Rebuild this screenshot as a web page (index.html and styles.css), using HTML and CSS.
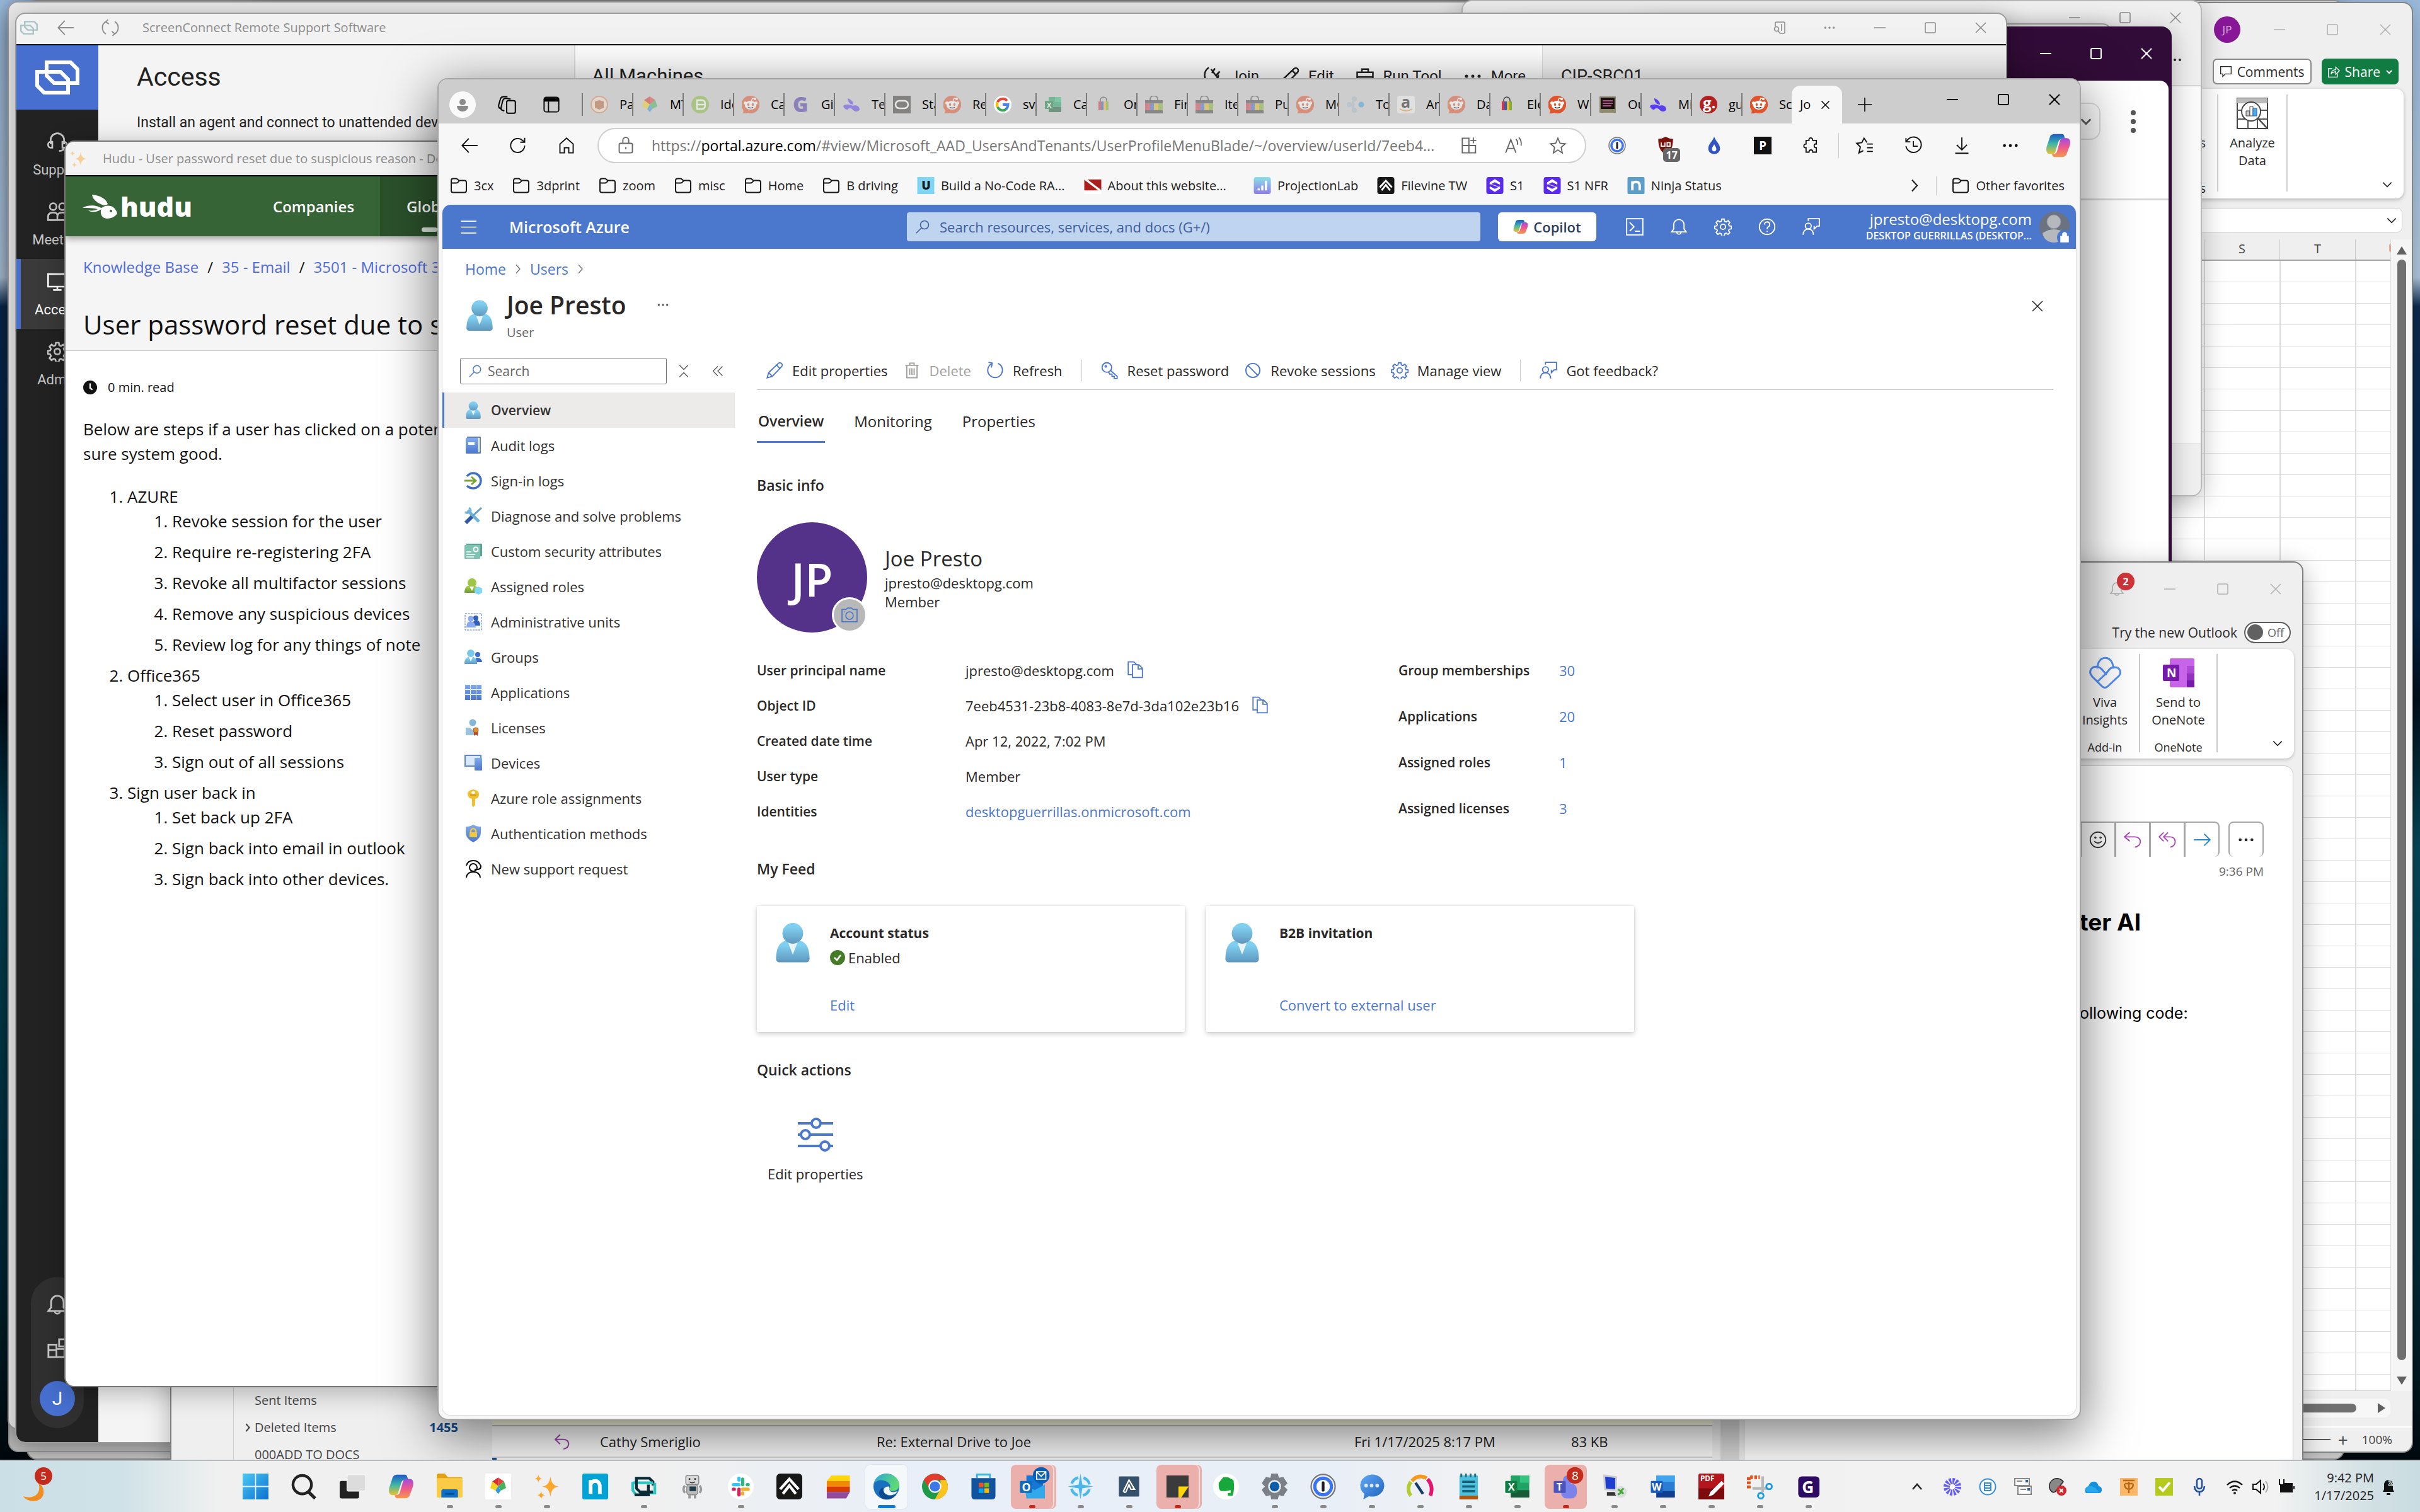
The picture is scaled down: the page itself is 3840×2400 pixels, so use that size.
FILE: index.html
```html
<!DOCTYPE html>
<html lang="en">
<head>
<meta charset="utf-8">
<title>Joe Presto - Microsoft Azure</title>
<link rel="stylesheet" href="styles.css">
</head>
<body>
<svg class="defs" aria-hidden="true">
  <defs>
    <linearGradient id="gUser" x1="0" y1="0" x2="0" y2="1"><stop offset="0.2" stop-color="#7fcff0"/><stop offset="1" stop-color="#5f97bd"/></linearGradient>
    <linearGradient id="gBlue" x1="0" y1="0" x2="0" y2="1"><stop offset="0" stop-color="#82a9ec"/><stop offset="1" stop-color="#4b77cc"/></linearGradient>
    <linearGradient id="gGreen" x1="0" y1="0" x2="0" y2="1"><stop offset="0" stop-color="#a9d049"/><stop offset="1" stop-color="#6f9a33"/></linearGradient>
    <linearGradient id="gWin" x1="0" y1="0" x2="1" y2="1"><stop offset="0" stop-color="#4cc9f5"/><stop offset="1" stop-color="#0a70cf"/></linearGradient>
    <linearGradient id="gCopA" x1="0" y1="0" x2="0" y2="1"><stop offset="0" stop-color="#1b59c9"/><stop offset="0.5" stop-color="#3fb6a8"/><stop offset="1" stop-color="#e8c32f"/></linearGradient>
    <linearGradient id="gCopB" x1="0" y1="0" x2="0" y2="1"><stop offset="0" stop-color="#a14be0"/><stop offset="0.5" stop-color="#ee5a8c"/><stop offset="1" stop-color="#f59a4a"/></linearGradient>
    <linearGradient id="gEdge" x1="0" y1="0" x2="1" y2="0.4"><stop offset="0" stop-color="#2aa5dc"/><stop offset="1" stop-color="#5edb72"/></linearGradient>
    <linearGradient id="gChat" x1="0" y1="0" x2="1" y2="1"><stop offset="0" stop-color="#62a8f2"/><stop offset="1" stop-color="#1e63bf"/></linearGradient>
    <linearGradient id="gLab" x1="0" y1="0" x2="0" y2="1"><stop offset="0" stop-color="#8be0ea"/><stop offset="1" stop-color="#8d7be6"/></linearGradient>
  </defs>
  <symbol id="min" viewBox="0 0 20 20"><path class="ln" d="M1 10h18"/></symbol>
  <symbol id="max" viewBox="0 0 20 20"><rect class="ln" x="2" y="2" width="16" height="16" rx="2"/></symbol>
  <symbol id="close" viewBox="0 0 20 20"><path class="ln" d="M2 2l16 16M18 2L2 18"/></symbol>
  <symbol id="dots" viewBox="0 0 24 24"><circle cx="4" cy="12" r="2"/><circle cx="12" cy="12" r="2"/><circle cx="20" cy="12" r="2"/></symbol>
  <symbol id="down" viewBox="0 0 24 24"><path class="ln" d="M4 8l8 8 8-8"/></symbol>
  <symbol id="right" viewBox="0 0 24 24"><path class="ln" d="M8 3l8 9-8 9"/></symbol>
  <symbol id="back" viewBox="0 0 24 24"><path class="ln" d="M23 12H2M11 2.500L2 12l9 9.500"/></symbol>
  <symbol id="reload" viewBox="0 0 24 24"><path class="ln" d="M21 12a9.500 9.500 0 1 1-3-7l3 2.500M21 1.500v6h-6"/></symbol>
  <symbol id="cycle" viewBox="0 0 24 24"><path class="ln" d="M6 3.500a10 10 0 0 0 0 17M18 3.500a10 10 0 0 1 0 17M9 1L6 4l4 3M15 23l3-3-4-3"/></symbol>
  <symbol id="home" viewBox="0 0 24 24"><path class="ln" d="M3 10l9-8 9 8v12h-6v-7H9v7H3z"/></symbol>
  <symbol id="folder" viewBox="0 0 28 26"><path class="ln" d="M2 5a3 3 0 0 1 3-3h5c2 0 3 3 5 3h8a3 3 0 0 1 3 3v13a3 3 0 0 1-3 3H5a3 3 0 0 1-3-3zM2 9h8c2 0 3-1 5-4"/></symbol>
  <symbol id="search" viewBox="0 0 24 24"><circle class="ln" cx="15" cy="9" r="6.500"/><path class="ln" d="M10 14L2 22"/></symbol>
  <symbol id="user" viewBox="0 0 24 26"><path fill="url(#gUser)" d="M1 24c0-7 2-11 6-12h10c4 1 6 5 6 12 0 1-1 2-2 2H3c-1 0-2-1-2-2z"/><path fill="#e9f5fb" d="M8.500 12h7L12 21z"/><circle cx="12" cy="7" r="6.800" fill="url(#gUser)"/></symbol>
  <symbol id="pencil" viewBox="0 0 24 24"><path class="ln" d="M2 22l2-7L17 2.500a3 3 0 0 1 4.500 4.500L9 20zM15 5l4.500 4.500M4 15l5 5"/></symbol>
  <symbol id="trash" viewBox="0 0 24 24"><path class="ln" d="M3 5h18M5 5v17h14V5M9 5V2h6v3M9 9v9M12 9v9M15 9v9"/></symbol>
  <symbol id="refresh" viewBox="0 0 24 24"><path class="ln" d="M16 2.500a10 10 0 1 1-9 .5M3 1l5 1-1 6"/></symbol>
  <symbol id="key" viewBox="0 0 24 24"><circle class="ln" cx="8" cy="8" r="6.500"/><circle class="ln" cx="6.500" cy="6.500" r="1"/><path class="ln" d="M13 12l9 8v3h-4v-3h-3v-3h-3l-2-3"/></symbol>
  <symbol id="ban" viewBox="0 0 24 24"><circle class="ln" cx="12" cy="12" r="9.500"/><path class="ln" d="M5.500 5.500l13 13"/></symbol>
  <symbol id="gear" viewBox="0 0 24 24"><circle class="ln" cx="12" cy="12" r="3.500"/><path class="ln" d="M10.300 1.500h3.400l.6 3 2 .9 2.600-1.700 2.400 2.400-1.700 2.600.9 2 3 .6v3.400l-3 .6-.9 2 1.700 2.600-2.400 2.400-2.600-1.700-2 .9-.6 3h-3.400l-.6-3-2-.9-2.600 1.700-2.400-2.400 1.700-2.600-.9-2-3-.6v-3.400l3-.6.9-2-1.700-2.600 2.400-2.400 2.600 1.700 2-.9z"/></symbol>
  <symbol id="feedback" viewBox="0 0 24 24"><circle class="ln" cx="8" cy="11" r="4"/><path class="ln" d="M1 23c0-5 3-8 7-8s7 3 7 8M8 4V1h15v10h-3l-4 4v-4"/></symbol>
  <symbol id="copy" viewBox="0 0 24 24"><path class="ln" d="M9 19H2V1h8l4 4M8 5h9l5 5v13H8zM16 5v6h6"/></symbol>
  <symbol id="bell" viewBox="0 0 24 24"><path class="ln" d="M2 19h20l-3-4V9A7 7 0 0 0 5 9v6zM9 19a3 3 0 0 0 6 0"/></symbol>
  <symbol id="star" viewBox="0 0 24 24"><path class="ln" d="M12 2l3 7 7 .7-5.500 4.800L18 22l-6-4-6 4 1.500-7.500L2 9.700 9 9z"/></symbol>
  <symbol id="shellico" viewBox="0 0 24 24"><rect class="ln" x="1" y="1" width="22" height="22"/><path class="ln" d="M5 6l6 6-6 6M12 18h7"/></symbol>
  <symbol id="help" viewBox="0 0 24 24"><circle class="ln" cx="12" cy="12" r="10.500"/><path class="ln" d="M8.500 9a3.500 3.500 0 1 1 5 3c-1 .7-1.500 1-1.500 3M12 17.500v1.500"/></symbol>
  <symbol id="copilot" viewBox="0 0 24 24"><path fill="url(#gCopA)" d="M9 1h6c2 0 2.500 1 3 3l.5 2h-3c-2 0-3 1-3.500 3L9.500 17c-.5 2-1 3-3 3H4c-3 0-4-3-3-7L4 4c.7-2 2-3 5-3z"/><path fill="url(#gCopB)" d="M15 23H9c-2 0-2.500-1-3-3h1.500c2 0 3-1 3.500-3L13.500 8c.5-2 1.500-3 3.500-3h3c3 0 4 3 3 7l-3 8c-.7 2-2 3-5 3z"/></symbol>
  <symbol id="reddit" viewBox="0 0 28 28"><path d="M14 0a14 14 0 1 1-5 27c-2 1-5 1-8 1 2-2 2-4 1-6A14 14 0 0 1 14 0z" fill="#e0532b"/><path d="M15 9l2-5 4 1" stroke="#fff" stroke-width="1.500" fill="none"/><circle cx="21" cy="5" r="2" fill="#fff"/><ellipse cx="14" cy="15" rx="9" ry="7" fill="#fff"/><circle cx="5.500" cy="11.500" r="2.500" fill="#fff"/><circle cx="22.500" cy="11.500" r="2.500" fill="#fff"/><circle cx="10.500" cy="14" r="1.900" fill="#e0532b"/><circle cx="17.500" cy="14" r="1.900" fill="#e0532b"/><path d="M10 18q4 3 8 0" stroke="#222" stroke-width="1.500" fill="none"/></symbol>
  <symbol id="ebay" viewBox="0 0 28 28"><path d="M8 8V5a6 5 0 0 1 12 0v3" fill="none" stroke="#555" stroke-width="2"/><path d="M0 7h28v5H0zM0 23h28v5H0z" fill="#444"/><path d="M0 12h8v11H0z" fill="#d9434a"/><path d="M8 12h6v11H8z" fill="#3f6fd0"/><path d="M14 12h7v11h-7z" fill="#e3bb2e"/><path d="M21 12h7v11h-7z" fill="#88b536"/></symbol>
  <symbol id="ebaybag" viewBox="0 0 28 28"><path d="M9 9V7a5 5 0 0 1 10 0v2" fill="none" stroke="#444" stroke-width="1.500"/><path d="M6 9h4v14H6z" fill="#e0333c"/><path d="M10 9h4v14h-4z" fill="#2b5fd0"/><path d="M14 9h4v14h-4z" fill="#f0b92a"/><path d="M18 9h4v14h-4z" fill="#82b22c"/></symbol>
  <symbol id="bunny" viewBox="0 0 28 28"><path d="M8 4c6 2 9 6 9 10-5 0-9-4-9-10z" fill="#5a3ff0"/><path d="M1 16c4-3 10-3 15 0 6-2 11 1 11 6-2 4-8 4-11 0-3-3-6-3-8 0-3 0-6-2-7-6z" fill="#5a3ff0"/></symbol>
  <symbol id="penta" viewBox="0 0 28 28"><path d="M14 1l9 6-9 7z" fill="#e2453b"/><path d="M14 1L5 7l9 7z" fill="#d83030"/><path d="M23 7l3 10-8 4-4-7z" fill="#46b35c"/><path d="M5 7L2 17l8 4 4-7z" fill="#f3d21b"/><path d="M10 21l4-7 4 7-4 5z" fill="#2e9be0"/></symbol>
  <symbol id="excel" viewBox="0 0 28 28"><rect x="7" y="2" width="20" height="24" rx="1" fill="#21a366"/><path d="M17 2h10v8H17z" fill="#33c481"/><path d="M7 18h20v8H7z" fill="#185c37"/><rect x="1" y="8" width="13" height="13" rx="1" fill="#107c41"/><text x="4" y="18.500" class="it" font-size="11">X</text></symbol>
  <symbol id="sparkle" viewBox="0 0 28 28"><path d="M18 3c1 7 3 10 9 11-6 1-8 4-9 11-1-7-3-10-9-11 6-1 8-4 9-11zM5 1c.5 3 1.500 4 4 4.500C6.500 6 5.500 7 5 10c-.5-3-1.500-4-4-4.500C3.500 5 4.500 4 5 1zM8 19c.5 3 1.500 4 4 4.500-2.500.5-3.500 1.500-4 4.500-.5-3-1.500-4-4-4.500 2.500-.5 3.500-1.500 4-4.500z" fill="#fba62c"/></symbol>
  <symbol id="sc" viewBox="0 0 70 54"><path d="M18 3h38l11 11v22H30L18 24z" fill="none" stroke="currentColor" stroke-width="6"/><path d="M3 18h37l12 12v21H14L3 40z" fill="none" stroke="currentColor" stroke-width="6"/></symbol>
  <symbol id="filevine" viewBox="0 0 28 28"><rect width="28" height="28" rx="4" fill="#171717"/><path d="M4 17L14 6l10 11" fill="none" stroke="#fff" stroke-width="3"/><path d="M7 22l7-9 7 9" fill="none" stroke="#fff" stroke-width="3"/></symbol>
  <symbol id="s1" viewBox="0 0 28 28"><rect width="28" height="28" rx="4" fill="#5a2bea"/><path d="M6 9l8-5 8 5v3L14 8l-8 4zM6 19l8 5 8-5v-3l-8 4-8-4zM8 12l12 4" fill="#fff" stroke="#fff" stroke-width="1"/></symbol>
  <symbol id="onepw" viewBox="0 0 28 28"><circle cx="14" cy="14" r="13" fill="#f2f2f6" stroke="#777" stroke-width="1.500"/><circle cx="14" cy="14" r="9" fill="#fff" stroke="#3a74f0" stroke-width="3.500"/><rect x="12.500" y="8.500" width="3" height="11" rx="1" fill="#1b1b2a"/></symbol>
</svg>

<main class="desktop">
  <section class="win back-a"></section>
  <section class="win back-b"></section>

  <section class="win excel" aria-label="Spreadsheet">
    <header class="wbar faint"><span class="jp">JP</span><div class="wbtns"><button aria-label="Minimize"><svg><use href="#min"/></svg></button><button aria-label="Maximize"><svg><use href="#max"/></svg></button><button aria-label="Close"><svg><use href="#close"/></svg></button></div></header>
    <div class="xl-actions">
      <button class="comments"><svg viewBox="0 0 24 24"><path class="ln" d="M2 2h20v14H11l-5 5v-5H2z"/></svg>Comments</button>
      <button class="share"><svg viewBox="0 0 24 24"><path class="ln" d="M9 6H2v16h17v-7M7 16c1-6 5-8 9-8V3l7 7-7 7v-5c-4 0-7 1-9 4z"/></svg>Share<svg class="tiny"><use href="#down"/></svg></button>
    </div>
    <div class="xl-ribbon">
      <div class="xl-cut"><span>s</span><span>s</span></div>
      <button class="analyze"><svg viewBox="0 0 50 50"><path d="M1 1h48v48H1z" fill="#fff" stroke="#444" stroke-width="2"/><path d="M1 1h48v8H1z" fill="#bbb"/><path d="M1 20h48M1 34h48M18 34v15M33 34v15" stroke="#555" stroke-width="2"/><circle cx="23" cy="22" r="15" fill="#fff" stroke="#444" stroke-width="2"/><path d="M15 21h6v8h-6z" fill="#ccc" stroke="#444"/><path d="M21 14h5v15h-5z" fill="#fff" stroke="#444"/><path d="M26 17h6v12h-6z" fill="#55a8e8" stroke="#1a6fc0"/><path d="M34 33l14 15" stroke="#444" stroke-width="2.500"/></svg><span>Analyze<br>Data</span></button>
      <button class="collapse" aria-label="Collapse ribbon"><svg><use href="#down"/></svg></button>
    </div>
    <div class="xl-formula"><svg><use href="#down"/></svg></div>
    <div class="xl-sheet">
      <div class="xl-cells"><div class="xl-cols"><span>S</span><span>T</span><span class="u">U</span></div><div class="xl-grid"></div></div>
      <div class="xl-scroll"><i class="tri-up"></i><b></b><i class="tri-down"></i></div>
    </div>
    <div class="xl-hscroll"><b></b><i></i></div>
    <div class="xl-status"><i></i><span>+</span><span class="pct">100%</span></div>
  </section>

  <section class="win back-e"></section>

  <section class="win peek-c" aria-label="Background window">
    <header class="wbar dim"><div class="wbtns"><button aria-label="Minimize"><svg><use href="#min"/></svg></button><button aria-label="Maximize"><svg><use href="#max"/></svg></button><button aria-label="Close"><svg><use href="#close"/></svg></button></div></header>
    <div class="peek-tools"><svg><use href="#dots"/></svg></div>
    <div class="peek-page"></div>
    <div class="peek-foot"></div>
  </section>
  <section class="win back-d"></section>

  <section class="win purple" aria-label="Slack">
    <header class="wbar light"><div class="wbtns"><button aria-label="Minimize"><svg><use href="#min"/></svg></button><button aria-label="Maximize"><svg><use href="#max"/></svg></button><button aria-label="Close"><svg><use href="#close"/></svg></button></div></header>
    <div class="purple-page"><div class="purple-top"><span class="purple-box"><svg><use href="#down"/></svg></span><span class="kebab"><i></i><i></i><i></i></span></div></div>
  </section>

  <section class="win screenc" aria-label="ScreenConnect">
    <header class="wbar grey"><svg class="sclogo"><use href="#sc"/></svg><svg><use href="#back"/></svg><svg><use href="#cycle"/></svg><span class="ttl">ScreenConnect Remote Support Software</span><div class="wbtns"><button aria-label="Find"><svg viewBox="0 0 20 20"><path class="ln" d="M4 8V3q0-2 2-2h11q2 0 2 2v14q0 2-2 2h-5M14 4v11"/><circle class="ln" cx="6" cy="12" r="3.500"/><path class="ln" d="M8.500 15l3 4"/></svg></button><button aria-label="More"><svg><use href="#dots"/></svg></button><button aria-label="Minimize"><svg><use href="#min"/></svg></button><button aria-label="Maximize"><svg><use href="#max"/></svg></button><button aria-label="Close"><svg><use href="#close"/></svg></button></div></header>
    <div class="sc-body">
      <nav class="sc-side">
        <div class="sc-brand"><svg><use href="#sc"/></svg></div>
        <div class="sc-nav">
          <a href="#support"><svg viewBox="0 0 24 24"><path class="ln" d="M4 15V10a8 8 0 0 1 16 0v5M4 12c-4 0-4 7 0 7h2v-7zM20 12c4 0 4 7 0 7h-2v-7zM20 19c0 3-3 4-6 4"/></svg>Support</a>
          <a href="#meeting"><svg viewBox="0 0 24 24"><circle class="ln" cx="7" cy="6" r="4"/><circle class="ln" cx="18" cy="6" r="4"/><path class="ln" d="M1 22v-4q0-5 6-5t5 5v4zM12 18q0-5 6-5t5 5v4H12"/></svg>Meeting</a>
          <a href="#access" class="on"><svg viewBox="0 0 24 24"><path class="ln" d="M1 3h22v15H1zM7 22h10M12 18v4"/></svg>Access</a>
          <a href="#admin"><svg><use href="#gear"/></svg>Admin</a>
        </div>
        <div class="sc-pill"><svg><use href="#bell"/></svg><svg viewBox="0 0 24 24"><path class="ln" d="M2 8h9v14H2zM11 13h9v9h-9M2 14h9M14 2h8v8h-8z"/></svg><span>J</span></div>
      </nav>
      <div class="sc-info"><h1>Access</h1><p>Install an agent and connect to unattended devices</p></div>
      <div class="sc-list"><h2>All Machines</h2>
        <div class="sc-cmds"><span><svg viewBox="0 0 24 24"><path class="ln" d="M8 1C1 6 1 15 8 21M11 3l9 12M16 2l-4 6M22 6l-5 5M12 15c4 3 9 0 8-5"/></svg>Join</span><span><svg><use href="#pencil"/></svg>Edit</span><span><svg viewBox="0 0 24 24"><path class="ln" d="M2 7h20v14H2zM8 7V3h8v4M2 13h20"/></svg>Run Tool</span><span><svg><use href="#dots"/></svg>More</span></div>
      </div>
      <div class="sc-detail"><h2>CIP-SBC01</h2></div>
    </div>
  </section>

  <section class="win outlook" aria-label="Outlook">
    <header class="wbar faint"><span class="ol-bell"><svg><use href="#bell"/></svg><b>2</b></span><div class="wbtns"><button aria-label="Minimize"><svg><use href="#min"/></svg></button><button aria-label="Maximize"><svg><use href="#max"/></svg></button><button aria-label="Close"><svg><use href="#close"/></svg></button></div></header>
    <div class="ol-try"><label for="newol">Try the new Outlook</label><span class="pill"><input type="checkbox" id="newol"><span>Off</span></span></div>
    <div class="ol-ribbon">
      <div class="ol-group viva"><svg viewBox="0 0 50 50"><path d="M13 18c0-22 24-22 25-2 12-1 15 10 7 16L30 46c-4 4-7 3-10 0L5 31c-8-9 0-18 10-15 5 1 9 9 13 12M40 17c-6-2-9 4-13 9L13 39" fill="none" stroke="#5590f5" stroke-width="3"/></svg><span>Viva<br>Insights</span><small>Add-in</small></div>
      <div class="ol-group"><svg viewBox="0 0 50 50"><rect x="11" y="2" width="39" height="46" rx="2" fill="#c864e8"/><path d="M38 14h12v12H38z" fill="#ae4bd5"/><path d="M38 26h12v11H38z" fill="#9332bf"/><path d="M38 37h12v11H38z" fill="#7719aa"/><rect y="12" width="26" height="26" rx="2" fill="#7719aa"/><text x="6" y="32" class="it" font-size="19">N</text></svg><span>Send to<br>OneNote</span><small>OneNote</small></div>
      <button class="collapse" aria-label="Collapse ribbon"><svg><use href="#down"/></svg></button>
    </div>
    <div class="ol-body">
      <nav class="ol-folders"><a href="#sent">Sent Items</a><a href="#deleted"><svg><use href="#right"/></svg>Deleted Items<b>1455</b></a><a href="#docs">000ADD TO DOCS</a></nav>
      <div class="ol-list">
        <div class="ol-tan"></div>
        <div class="ol-row"><svg viewBox="0 0 24 24"><path class="ln" d="M9 2L2 9l7 7M2 9h12c10 0 10 13 0 14"/></svg><span class="from">Cathy Smeriglio</span><span class="subj">Re: External Drive to Joe</span><span class="date">Fri 1/17/2025 8:17 PM</span><span class="size">83 KB</span></div>
        <div class="ol-next"><i></i></div>
      </div>
      <div class="ol-bar"></div>
      <article class="ol-read">
        <div class="ol-acts"><span class="grp"><button aria-label="React"><svg class="ink" viewBox="0 0 24 24"><circle class="ln" cx="12" cy="12" r="10.500"/><path class="ln" d="M7 14q5 5 10 0"/><circle cx="8.500" cy="9" r="1.500"/><circle cx="15.500" cy="9" r="1.500"/></svg></button><button aria-label="Reply"><svg class="vio" viewBox="0 0 24 24"><path class="ln" d="M8 2L1 8l7 6M1 8h14c10 0 10 13 0 14"/></svg></button><button aria-label="Reply all"><svg class="vio" viewBox="0 0 24 24"><path class="ln" d="M7 2L1 8l6 6M13 2L7 8l6 6M7 8h9c9 0 9 13 0 14"/></svg></button><button aria-label="Forward"><svg class="blu" viewBox="0 0 24 24"><path class="ln" d="M1 12h22M15 4l8 8-8 8"/></svg></button></span><button class="more" aria-label="More"><svg><use href="#dots"/></svg></button></div>
        <time>9:36 PM</time>
        <div class="ol-mail"><h2>ter AI</h2><p>ollowing code:</p></div>
      </article>
    </div>
  </section>

  <section class="win hudu" aria-label="Hudu">
    <header class="wbar grey"><svg class="spark"><use href="#sparkle"/></svg><span class="ttl">Hudu - User password reset due to suspicious reason - Desktop</span></header>
    <nav class="hd-nav">
      <span class="hd-logo"><svg viewBox="0 0 55 38"><path fill="#fff" d="M15 0C28 1 38 7 40 15c-4 3-8 2-11 0C22 12 16 7 15 0z"/><path fill="#fff" d="M0 21c10-6 24-4 31 1-6 6-17 7-22 3 6 1 11 0 15-2-8-2-16-2-24-2z"/><path fill="#fff" d="M30 21c11-7 22-3 25 9-3 5-10 8-17 8-8-1-11-8-8-17z"/><circle cx="45" cy="26" r="2" fill="#376437"/></svg>hudu</span>
      <a href="#companies">Companies</a><a href="#global" class="on">Global</a>
    </nav>
    <div class="hd-head"><p class="hd-crumb"><a href="#kb">Knowledge Base</a><i>/</i><a href="#email">35 - Email</a><i>/</i><a href="#m365">3501 - Microsoft 365</a></p><h1>User password reset due to suspicious reason</h1></div>
    <div class="hd-doc">
      <p class="hd-read"><svg viewBox="0 0 24 24"><circle cx="12" cy="12" r="12"/><path d="M12 5v8l4 3" stroke="#fff" stroke-width="2.500" fill="none"/></svg>0 min. read</p>
      <p>Below are steps if a user has clicked on a potentially<br>sure system good.</p>
      <ol>
        <li>AZURE<ol><li>Revoke session for the user</li><li>Require re-registering 2FA</li><li>Revoke all multifactor sessions</li><li>Remove any suspicious devices</li><li>Review log for any things of note</li></ol></li>
        <li>Office365<ol><li>Select user in Office365</li><li>Reset password</li><li>Sign out of all sessions</li></ol></li>
        <li>Sign user back in<ol><li>Set back up 2FA</li><li>Sign back into email in outlook</li><li>Sign back into other devices.</li></ol></li>
      </ol>
    </div>
  </section>

  <section class="win edge" aria-label="Browser">
    <header class="tabs">
      <span class="prof"><svg viewBox="0 0 24 24"><circle cx="12" cy="8" r="5"/><path d="M3 14h18c0 12-18 12-18 0z"/></svg></span>
      <svg class="tico" viewBox="0 0 24 24"><rect class="ln" x="12" y="7" width="11" height="16" rx="2"/><path class="ln" d="M9 20l-3-1q-2-1-1-4l2-8q1-3 4-3l6 1M4 17q-3-1-2-5l2-7q1-3 4-3h5"/></svg>
      <svg class="tico" viewBox="0 0 24 24"><rect class="ln" x="2" y="2" width="20" height="20" rx="3"/><path d="M2 3h20v5H2z"/><path class="ln" d="M8 8v14"/></svg>
      <div class="tablist">
        <span class="tab off"><svg viewBox="0 0 28 28"><circle cx="14" cy="14" r="13" fill="#f5e2d2" stroke="#d98b5a" stroke-width="2"/><path d="M7 9l7-2 7 2v10l-7 3-7-3z" fill="#b8683c"/></svg>Part</span>
        <span class="tab off"><svg><use href="#penta"/></svg>MT</span>
        <span class="tab off"><svg viewBox="0 0 28 28"><circle cx="14" cy="14" r="14" fill="#86bb3c"/><path d="M9 7h8q5 0 5 7t-5 7H9zM7 14h14" fill="none" stroke="#fff" stroke-width="2.500"/></svg>Ide</span>
        <span class="tab off"><svg><use href="#reddit"/></svg>Car</span>
        <span class="tab off"><svg viewBox="0 0 28 28"><text x="1" y="26" font-size="33" font-weight="800" fill="#4a35a8">G</text></svg>Giz</span>
        <span class="tab off"><svg><use href="#bunny"/></svg>Tec</span>
        <span class="tab off"><svg viewBox="0 0 28 28"><path d="M0 0h28v28H0z" fill="#3c3a38"/><rect x="4" y="8" width="20" height="12" rx="6" fill="none" stroke="#fff" stroke-width="2.500"/></svg>Sta</span>
        <span class="tab off"><svg><use href="#reddit"/></svg>Rec</span>
        <span class="tab"><svg viewBox="0 0 28 28"><circle cx="14" cy="14" r="14" fill="#fff"/><path d="M21 8a9 9 0 0 0-15 2" stroke="#e94335" stroke-width="4" fill="none"/><path d="M6 10a9 9 0 0 0 0 8" stroke="#fbbc05" stroke-width="4" fill="none"/><path d="M6 18a9 9 0 0 0 14 3" stroke="#34a853" stroke-width="4" fill="none"/><path d="M14 14h8.500q0 4-3 7" stroke="#4285f4" stroke-width="4" fill="none"/></svg>svg</span>
        <span class="tab off"><svg><use href="#excel"/></svg>Cal</span>
        <span class="tab off"><svg><use href="#ebaybag"/></svg>Ord</span>
        <span class="tab off"><svg><use href="#ebay"/></svg>Fin</span>
        <span class="tab off"><svg><use href="#ebay"/></svg>Iten</span>
        <span class="tab off"><svg><use href="#ebay"/></svg>Pur</span>
        <span class="tab off"><svg><use href="#reddit"/></svg>MC</span>
        <span class="tab off"><svg viewBox="0 0 28 28"><path d="M12 5q-4 5-1 9-3 5 1 9M3 14h8" stroke="#a8bcc8" stroke-width="3" fill="none"/><circle cx="12" cy="5" r="4" fill="#a8bcc8"/><circle cx="12" cy="23" r="4" fill="#a8bcc8"/><circle cx="4" cy="14" r="4" fill="#a8bcc8"/><circle cx="23" cy="14" r="4.500" fill="#3fa0e0"/></svg>Too</span>
        <span class="tab off"><svg viewBox="0 0 28 28"><rect width="28" height="28" rx="4" fill="#f3f3f3"/><text x="6" y="19" font-size="25" font-weight="700" fill="#222">a</text><path d="M4 21q10 6 20 0" stroke="#f09a2a" stroke-width="2" fill="none"/></svg>Am</span>
        <span class="tab off"><svg><use href="#reddit"/></svg>Day</span>
        <span class="tab"><svg><use href="#ebaybag"/></svg>Ele</span>
        <span class="tab"><svg><use href="#reddit"/></svg>Wh</span>
        <span class="tab"><svg viewBox="0 0 28 28"><rect x="1" y="1" width="26" height="26" fill="#8f8a6b"/><rect x="3" y="3" width="22" height="18" fill="#16130f"/><path d="M6 8h16M6 12h16M6 16h14" stroke="#b9508e" stroke-width="2"/></svg>Our</span>
        <span class="tab"><svg><use href="#bunny"/></svg>Mi</span>
        <span class="tab"><svg viewBox="0 0 28 28"><circle cx="14" cy="14" r="14" fill="#b32020"/><text x="5" y="20" font-size="24" font-weight="700" fill="#fff">g.</text></svg>gui</span>
        <span class="tab"><svg><use href="#reddit"/></svg>Sch</span>
        <span class="tab active">Jo<svg><use href="#close"/></svg></span>
      </div>
      <button class="newtab" aria-label="New tab"><svg viewBox="0 0 24 24"><path class="ln" d="M12 1v22M1 12h22"/></svg></button>
      <div class="wbtns"><button aria-label="Minimize"><svg><use href="#min"/></svg></button><button aria-label="Maximize"><svg><use href="#max"/></svg></button><button aria-label="Close"><svg><use href="#close"/></svg></button></div>
    </header>
    <div class="toolbar">
      <button aria-label="Back"><svg><use href="#back"/></svg></button><button aria-label="Reload"><svg><use href="#reload"/></svg></button><button aria-label="Home"><svg><use href="#home"/></svg></button>
      <div class="addr"><svg viewBox="0 0 24 24"><rect class="ln" x="3" y="9" width="18" height="13" rx="2"/><path class="ln" d="M8 9V5a4 4 0 0 1 8 0v4M12 14v3"/></svg>
        <div class="url" role="textbox" contenteditable="true" spellcheck="false" aria-label="Address">https://<b>portal.azure.com</b>/#view/Microsoft_AAD_UsersAndTenants/UserProfileMenuBlade/~/overview/userId/7eeb4...</div>
        <svg viewBox="0 0 24 24"><path class="ln" d="M2 2h9v10H2zM2 12h9v10H2zM11 12h9v10h-9zM17 1v8M13 5h8"/></svg><svg viewBox="0 0 24 24"><path class="ln" d="M1 22L8 4l7 18M4 16h8M15 3q3 4 2 8M19 1q4 5 3 11"/></svg><svg><use href="#star"/></svg></div>
      <div class="exts">
        <svg><use href="#onepw"/></svg>
        <span class="ub"><svg viewBox="0 0 24 24"><path d="M12 0q5 3 10 3c0 10-2 17-10 21C4 20 2 13 2 3q5 0 10-3z" fill="#7b130d"/><path d="M6 8v5h5V8M14 8h4v5h-4z" stroke="#fff" stroke-width="1.500" fill="none"/></svg><b>17</b></span>
        <svg viewBox="0 0 24 24"><path d="M12 0c2 6 8 10 8 16 0 10-16 10-16 0C4 10 10 6 12 0z" fill="#3355c4"/><path d="M12 10c1 3 3 4 3 7 0 4-6 4-6 0 0-3 2-4 3-7z" fill="#fff"/></svg>
        <svg viewBox="0 0 24 24"><path d="M0 0h24v24H0z"/><text x="7" y="18" class="it" font-size="16">P</text></svg>
        <svg viewBox="0 0 24 24"><path class="ln" d="M5 5h4c-1-4 5-5 5 0h5v5c-4-1-4 5 0 5v6h-5c1-4-5-4-5 0H5v-6c-4 1-4-5 0-5z"/></svg>
      </div>
      <div class="exts right">
        <svg viewBox="0 0 24 24"><path class="ln" d="M15 8l-4-6-3 6-7 1 5 5-2 8 6-3M15 10h8M15 15h8M15 20h8"/></svg><svg viewBox="0 0 24 24"><path class="ln" d="M3 6a10.500 10.500 0 1 1-1 7M2 2v5h6M12 6v7h6"/></svg><svg viewBox="0 0 24 24"><path class="ln" d="M12 1v16M5 11l7 7 7-7M3 22.500h18"/></svg><svg><use href="#dots"/></svg><svg class="big"><use href="#copilot"/></svg>
      </div>
    </div>
    <nav class="marks">
      <a href="#b1"><svg><use href="#folder"/></svg>3cx</a><a href="#b2"><svg><use href="#folder"/></svg>3dprint</a><a href="#b3"><svg><use href="#folder"/></svg>zoom</a><a href="#b4"><svg><use href="#folder"/></svg>misc</a><a href="#b5"><svg><use href="#folder"/></svg>Home</a><a href="#b6"><svg><use href="#folder"/></svg>B driving</a>
      <a href="#b7"><svg viewBox="0 0 28 28"><path d="M0 0h28v28H0z" fill="#7ed6f4"/><text x="7" y="21" font-size="20" font-weight="800">U</text></svg>Build a No-Code RA...</a>
      <a href="#b8" class="wide"><svg viewBox="0 0 28 28"><path d="M0 0h28v28H0z" fill="#fff"/><path d="M0 4h28v18H0z" fill="#ab1f1a"/><path d="M1 3l26 20" stroke="#fff" stroke-width="3.500"/></svg>About this website...</a>
      <a href="#b9"><svg viewBox="0 0 28 28"><rect width="28" height="28" rx="4" fill="url(#gLab)"/><path d="M8 22v-3M14 22v-8M20 22V6" stroke="#fff" stroke-width="3.500"/></svg>ProjectionLab</a>
      <a href="#b10"><svg><use href="#filevine"/></svg>Filevine TW</a><a href="#b11"><svg><use href="#s1"/></svg>S1</a><a href="#b12"><svg><use href="#s1"/></svg>S1 NFR</a>
      <a href="#b13"><svg viewBox="0 0 28 28"><rect width="28" height="28" rx="2" fill="#5b9fc8"/><path d="M8 22V7M8 12q1-4 6-4t6 5v9" stroke="#fff" stroke-width="4" fill="none"/></svg>Ninja Status</a>
      <span class="marks-end"><svg><use href="#right"/></svg><a href="#b14"><svg><use href="#folder"/></svg>Other favorites</a></span>
    </nav>
    <div class="page">
      <header class="az-top">
        <button class="burger" aria-label="Menu"><svg viewBox="0 0 24 24"><path class="ln" d="M0 3h24M0 12h24M0 21h24"/></svg></button>
        <a class="az-brand" href="#azure">Microsoft Azure</a>
        <label class="az-search"><svg><use href="#search"/></svg><input type="text" aria-label="Search resources" placeholder="Search resources, services, and docs (G+/)"></label>
        <button class="az-copilot"><svg><use href="#copilot"/></svg>Copilot</button>
        <div class="az-icons"><button aria-label="Cloud shell"><svg><use href="#shellico"/></svg></button><button aria-label="Notifications"><svg><use href="#bell"/></svg></button><button aria-label="Settings"><svg><use href="#gear"/></svg></button><button aria-label="Help"><svg><use href="#help"/></svg></button><button aria-label="Feedback"><svg><use href="#feedback"/></svg></button></div>
        <div class="az-acct"><span>jpresto@desktopg.com</span><small>DESKTOP GUERRILLAS (DESKTOP...</small></div>
        <svg class="az-ava" viewBox="0 0 48 52"><circle cx="24" cy="26" r="24" fill="#6b7380"/><circle cx="23" cy="18" r="11" fill="#b5b9be" stroke="#8b9099"/><path d="M5 36q18-12 36 0c-3 20-33 20-36 0z" fill="#b5b9be"/><circle cx="40" cy="43" r="12" fill="#4b77cc"/><path d="M34 41h12v9H34zM37 41v-4q3-4 6 0v4" fill="#fff" stroke="#fff" stroke-width="1.500"/></svg>
      </header>
      <nav class="crumb"><a href="#home">Home</a><svg><use href="#right"/></svg><a href="#users">Users</a><svg><use href="#right"/></svg></nav>
      <div class="blade">
        <svg class="bl-ico"><use href="#user"/></svg>
        <div class="bl-name"><h1>Joe Presto<svg><use href="#dots"/></svg></h1><p>User</p></div>
        <button class="bl-close" aria-label="Close"><svg><use href="#close"/></svg></button>
      </div>
      <div class="az-body">
        <aside class="side">
          <div class="side-top"><label class="side-search"><svg><use href="#search"/></svg><input type="text" aria-label="Search menu" placeholder="Search"></label><svg viewBox="0 0 24 24"><path class="ln" d="M4 1l8 8 8-8M4 23l8-8 8 8"/></svg><svg viewBox="0 0 24 24"><path class="ln" d="M12 3l-9 9 9 9M21 3l-9 9 9 9"/></svg></div>
          <ul>
            <li class="on"><a href="#n1"><svg><use href="#user"/></svg>Overview</a></li>
            <li><a href="#n2"><svg viewBox="0 0 28 28"><path d="M5 1h20v25H5z" fill="#fff" stroke="#2f5aa8" stroke-width="1.500"/><rect x="2" y="2" width="20" height="25" rx="1" fill="url(#gBlue)"/><path d="M6 9h10v4H6z" fill="#fff"/></svg>Audit logs</a></li>
            <li><a href="#n3"><svg viewBox="0 0 28 28"><path d="M4 7q4-5 10-5a12 12 0 0 1 0 24q-6 0-10-4" fill="none" stroke="#3c6fc4" stroke-width="3.500"/><path d="M0 14h18M11 8l7 6-7 6" fill="none" stroke="#76a52e" stroke-width="2.800"/></svg>Sign-in logs</a></li>
            <li><a href="#n4"><svg viewBox="0 0 28 28"><path d="M5 5l18 18" stroke="#6fb4dc" stroke-width="5"/><path d="M1 8a6 6 0 0 0 9-2 6 6 0 0 0-3-5" fill="none" stroke="#6fb4dc" stroke-width="3"/><path d="M27 1L13 14" stroke="#6a9cc4" stroke-width="3"/><path d="M12 15L2 25" stroke="#2f5aa0" stroke-width="6"/></svg>Diagnose and solve problems</a></li>
            <li><a href="#n5"><svg viewBox="0 0 28 28"><path d="M3 2h25v20H3z" fill="#5ba393"/><rect y="4" width="25" height="22" rx="1" fill="#7fc3b2"/><path d="M3 15h8M3 19h14M3 23h12" stroke="#fff" stroke-width="1.500"/><circle cx="18" cy="11" r="3.500" fill="none" stroke="#fff" stroke-width="2"/></svg>Custom security attributes</a></li>
            <li><a href="#n6"><svg viewBox="0 0 28 28"><path d="M0 24c0-6 2-10 5-11h12c3 1 5 5 5 11z" fill="url(#gGreen)"/><circle cx="12" cy="8" r="7" fill="#9cc643"/><path d="M8 14h7l-3 7z" fill="#fff"/><path d="M16 17l6-3 6 3v7l-6 3-6-3z" fill="#82d9f2"/></svg>Assigned roles</a></li>
            <li><a href="#n7"><svg viewBox="0 0 28 28"><rect x="1" y="1" width="26" height="26" fill="none" stroke="#4b77cc" stroke-dasharray="3 1.500"/><path d="M13 20q0-8 5-9 7 0 7 9z" fill="#2f5fb8"/><circle cx="18" cy="8" r="4" fill="#2f5fb8"/><path d="M3 23q0-9 6-10 8 0 9 10z" fill="#8aaaf0"/><circle cx="10" cy="9" r="4.500" fill="#8aaaf0"/></svg>Administrative units</a></li>
            <li><a href="#n8"><svg viewBox="0 0 28 28"><path d="M15 22q0-6 5-7 7 0 8 7z" fill="#3c6bc8"/><circle cx="21" cy="10" r="4" fill="#3c6bc8"/><path d="M0 25q0-10 6-11h8q6 1 6 11z" fill="url(#gUser)"/><path d="M7 14h6l-3 7z" fill="#fff"/><circle cx="10" cy="8" r="6" fill="#79c8ea"/></svg>Groups</a></li>
            <li><a href="#n9"><svg viewBox="0 0 28 28"><path d="M1 2h8v7H1zM10 2h8v7h-8zM19 2h8v7h-8zM1 10h8v7H1zM10 10h8v7h-8zM19 10h8v7h-8zM1 18h8v8H1zM10 18h8v8h-8zM19 18h8v8h-8z" fill="url(#gBlue)"/></svg>Applications</a></li>
            <li><a href="#n10"><svg viewBox="0 0 28 28"><path d="M2 14h7l4 4 4-4h5v12H2z" fill="#9cc3dd"/><circle cx="13" cy="6" r="5.500" fill="#84b6d6"/><path d="M15 19h6v8l-3-2-3 2z" fill="#b54c1e"/><circle cx="18" cy="18" r="4" fill="#e0912f" stroke="#b54c1e"/></svg>Licenses</a></li>
            <li><a href="#n11"><svg viewBox="0 0 28 28"><rect x="1" y="2" width="25" height="17" fill="#d8eafa" stroke="#5b86d6" stroke-width="2"/><rect x="16" y="6" width="12" height="20" rx="1" fill="url(#gBlue)"/></svg>Devices</a></li>
            <li><a href="#n12"><svg viewBox="0 0 28 28"><path d="M14 0q9 1 9 8 0 6-6 7v10l-3 3-2-2V15q-6-1-7-7 0-7 9-8z" fill="#f0c02f"/><ellipse cx="14" cy="5" rx="3" ry="2" fill="#fff"/><path d="M9 9h10" stroke="#d69a20" stroke-width="2"/></svg>Azure role assignments</a></li>
            <li><a href="#n13"><svg viewBox="0 0 28 28"><path d="M14 0q6 4 12 3v10q0 9-12 15Q2 22 2 13V3q6 1 12-3z" fill="url(#gBlue)"/><path d="M8 12h12v8H8z" fill="#f0c83c"/><path d="M10 12V9q4-6 8 0v3" fill="none" stroke="#f0c83c" stroke-width="2.500"/></svg>Authentication methods</a></li>
            <li><a href="#n14"><svg class="bold" viewBox="0 0 28 28"><circle class="ln" cx="14" cy="12" r="6"/><path class="ln" d="M3 28q1-9 11-9t11 9M3 9Q5 1 14 1t12 9q0 5-6 5h-4"/></svg>New support request</a></li>
          </ul>
        </aside>
        <div class="main">
          <div class="cmd">
            <button><svg><use href="#pencil"/></svg>Edit properties</button><button class="dis"><svg><use href="#trash"/></svg>Delete</button><button><svg><use href="#refresh"/></svg>Refresh</button>
            <i></i>
            <button><svg><use href="#key"/></svg>Reset password</button><button><svg><use href="#ban"/></svg>Revoke sessions</button><button><svg><use href="#gear"/></svg>Manage view</button>
            <i></i>
            <button><svg><use href="#feedback"/></svg>Got feedback?</button>
          </div>
          <nav class="ptabs"><a href="#t1" class="on">Overview</a><a href="#t2">Monitoring</a><a href="#t3">Properties</a></nav>
          <h2 class="h-basic">Basic info</h2>
          <div class="person"><div class="pic">JP<span><svg viewBox="0 0 24 24"><path class="ln" d="M1 4h6l2-2h6l2 2h6v18H1zM4 7.500h1"/><circle class="ln" cx="12" cy="13" r="5.500"/></svg></span></div><div class="pinfo"><strong>Joe Presto</strong><span>jpresto@desktopg.com</span><span>Member</span></div></div>
          <div class="facts">
            <table class="props"><tr><th>User principal name</th><td>jpresto@desktopg.com<svg><use href="#copy"/></svg></td></tr><tr><th>Object ID</th><td>7eeb4531-23b8-4083-8e7d-3da102e23b16<svg><use href="#copy"/></svg></td></tr><tr><th>Created date time</th><td>Apr 12, 2022, 7:02 PM</td></tr><tr><th>User type</th><td>Member</td></tr><tr><th>Identities</th><td><a href="#ident">desktopguerrillas.onmicrosoft.com</a></td></tr></table>
            <table class="counts"><tr><th>Group memberships</th><td><a href="#c1">30</a></td></tr><tr><th>Applications</th><td><a href="#c2">20</a></td></tr><tr><th>Assigned roles</th><td><a href="#c3">1</a></td></tr><tr><th>Assigned licenses</th><td><a href="#c4">3</a></td></tr></table>
          </div>
          <h2 class="h-feed">My Feed</h2>
          <div class="cards">
            <div class="card"><svg><use href="#user"/></svg><div><h3>Account status</h3><p><svg viewBox="0 0 24 24"><circle cx="12" cy="12" r="12" fill="#457b26"/><path d="M7 12l4 4 6-8" stroke="#fff" stroke-width="2.500" fill="none"/></svg>Enabled</p><a href="#edit">Edit</a></div></div>
            <div class="card"><svg><use href="#user"/></svg><div><h3>B2B invitation</h3><p></p><a href="#convert">Convert to external user</a></div></div>
          </div>
          <h2 class="h-quick">Quick actions</h2>
          <button class="quick"><svg viewBox="0 0 56 54"><path class="ln" d="M0 9h24M34 9h22M0 27h7M17 27h39M0 45h38M48 45h8"/><circle class="ln" cx="29" cy="9" r="7"/><circle class="ln" cx="12" cy="27" r="7"/><circle class="ln" cx="43" cy="45" r="7"/></svg>Edit properties</button>
        </div>
      </div>
    </div>
  </section>
</main>

<footer class="taskbar">
  <div class="widget"><svg viewBox="0 0 48 60"><path d="M28 22c8 16-4 34-28 26 8 14 44 14 38-14-2-6-6-10-10-12z" fill="#f08c22"/></svg><b>5</b></div>
  <div class="apps">
    <button aria-label="Start"><svg viewBox="0 0 28 28"><path d="M0 0h13.400v13.400H0zM14.600 0H28v13.400H14.600zM0 14.600h13.400V28H0zM14.600 14.600H28V28H14.600z" fill="url(#gWin)"/></svg></button>
    <button aria-label="Search"><svg viewBox="0 0 28 28"><circle cx="12" cy="12" r="10" fill="none" stroke="#222" stroke-width="3"/><path d="M18 19l8 8" stroke="#222" stroke-width="3.500"/></svg></button>
    <button aria-label="Task view"><svg viewBox="0 0 28 28"><rect y="8" width="21" height="19" rx="2" fill="#222"/><rect x="8" y="1" width="20" height="18" rx="2" fill="#dcdcdc" stroke="#f5f5f5"/></svg></button>
    <button aria-label="Copilot"><svg><use href="#copilot"/></svg></button>
    <button aria-label="Files" class="run"><svg viewBox="0 0 28 28"><path d="M0 2q0-2 2-2h7l3 4h14q2 0 2 2v19H0z" fill="#e3a214"/><rect y="5" width="28" height="21" rx="1" fill="#fccb45"/><path d="M5 26v-7q0-2 2-2h14q2 0 2 2v7z" fill="#0b6fca"/><path d="M9 22h10" stroke="#064f94" stroke-width="2"/></svg></button>
    <button aria-label="Shapes" class="run"><svg viewBox="0 0 28 28"><path d="M0 0h28v28H0z" fill="#fff"/><svg x="4" y="3" width="20" height="21"><use href="#penta"/></svg></svg></button>
    <button aria-label="Hudu" class="run"><svg><use href="#sparkle"/></svg></button>
    <button aria-label="Ninja"><svg viewBox="0 0 28 28"><rect width="28" height="28" rx="2" fill="#00a3d4"/><path d="M9 22V7M9 12q1-4 5-4t5 5v9" stroke="#fff" stroke-width="4" fill="none"/></svg></button>
    <button aria-label="ScreenConnect" class="run"><svg viewBox="0 0 28 28"><path d="M6 9V5h14l4 4v4" fill="none" stroke="#0b2b36" stroke-width="3"/><path d="M2 10h22M26 10v11h-8M2 9v9l3 4" fill="none" stroke="#2cc6c0" stroke-width="3"/><path d="M6 8v8l4 4h14M4 23h15V12" fill="none" stroke="#0b2b36" stroke-width="3"/></svg></button>
    <button aria-label="Robot"><svg viewBox="0 0 28 28"><rect x="7" y="2" width="14" height="10" rx="2" fill="#d8d8d8" stroke="#888"/><circle cx="11" cy="6" r="1" fill="#333"/><circle cx="17" cy="6" r="1" fill="#333"/><path d="M11 9q3 2 6 0" stroke="#333" fill="none"/><rect x="8" y="12" width="12" height="11" rx="3" fill="#bbb" stroke="#888"/><rect x="11" y="14" width="7" height="5" fill="#1c3d4c"/><path d="M6 13q-3 4 0 8M22 13q3 4 0 8M11 23v4M17 23v4" stroke="#999" stroke-width="2.500" fill="none"/></svg></button>
    <button aria-label="Slack" class="run"><svg viewBox="0 0 28 28"><circle cx="14" cy="14" r="14" fill="#fff"/><path d="M6 12h6M12 5v2" stroke="#36c5f0" stroke-width="3.500" stroke-linecap="round"/><path d="M16 6v6M21 12h1" stroke="#2eb67d" stroke-width="3.500" stroke-linecap="round"/><path d="M16 17h6M16 21v1" stroke="#ecb22e" stroke-width="3.500" stroke-linecap="round"/><path d="M12 17v6M6 17h1" stroke="#e01e5a" stroke-width="3.500" stroke-linecap="round"/></svg></button>
    <button aria-label="Filevine"><svg><use href="#filevine"/></svg></button>
    <button aria-label="Layers"><svg viewBox="0 0 28 28"><path d="M7 2h20v6H2z" fill="#ffd60a"/><path d="M2 8h25v6H2z" fill="#f08a00"/><path d="M2 14h25v6H2z" fill="#d83b01"/><path d="M2 20h25l-4 7H2z" fill="#944a9c"/></svg></button>
    <button aria-label="Edge" class="cur"><svg viewBox="0 0 28 28"><circle cx="14" cy="14" r="14" fill="#1b6fbf"/><path d="M0 12C2 0 16-3 24 4c7 7 4 15-3 15-4 0-4-2-3-4 2-7-14-12-18-3z" fill="url(#gEdge)"/><path d="M10 15c0 8 6 12 15 7-3 5-8 7-13 6-7-3-8-9-2-13z" fill="#0c4a8f"/><path d="M17 14c1 2-1 5 3 6 3 .5 5-.5 6-1-2 5-10 6-14 2-2-3-1-7 5-7z" fill="#f2f7fb"/></svg></button>
    <button aria-label="Chrome"><svg viewBox="0 0 28 28"><circle cx="14" cy="14" r="14" fill="#1e9a48"/><path d="M2 7a14 14 0 0 1 24 0H14l-6 9z" fill="#e33b2e"/><path d="M26 7q5 10-2 17-4 4-10 4l6-11V7z" fill="#fcc31e"/><circle cx="14" cy="14" r="7" fill="#fff"/><circle cx="14" cy="14" r="5.500" fill="#3b78e7"/></svg></button>
    <button aria-label="Store"><svg viewBox="0 0 28 28"><path d="M7 5V1h14v4" fill="none" stroke="#39b3ec" stroke-width="2"/><path d="M1 5h26v19q0 4-4 4H5q-4 0-4-4z" fill="#12539f"/><path d="M9 10h5v5H9z" fill="#f25022"/><path d="M15 10h5v5h-5z" fill="#7fba00"/><path d="M9 16h5v5H9z" fill="#00a4ef"/><path d="M15 16h5v5h-5z" fill="#ffb900"/></svg></button>
    <button aria-label="Outlook" class="alert stack"><svg viewBox="0 0 28 28"><rect x="8" y="2" width="18" height="18" fill="#1477d4"/><path d="M6 12l11 6 11-6v15H8z" fill="#32a9ea"/><rect x="1" y="8" width="13" height="13" rx="1" fill="#0f6cbd"/><text x="3" y="19" class="it" font-size="12">O</text><circle cx="24" cy="2" r="9" fill="#0560b6"/><path d="M19-2h10v8H19zl5 5 5-5" fill="none" stroke="#fff" stroke-width="1.200"/></svg></button>
    <button aria-label="Compass" class="run"><svg viewBox="0 0 28 28"><circle cx="14" cy="14" r="10" fill="none" stroke="#4cb8ea" stroke-width="3" stroke-dasharray="10 5.700" stroke-dashoffset="-3"/><path d="M14 0l2 12 12 2-12 2-2 12-2-12-12-2 12-2z" fill="#4cb8ea"/></svg></button>
    <button aria-label="Notes app" class="run"><svg viewBox="0 0 28 28"><rect x="3" y="3" width="22" height="22" rx="1" fill="#35506a"/><path d="M8 19l6-12 6 10h-4l-2-5-3 7q-1 3-3 0z" fill="none" stroke="#fff" stroke-width="1.500"/></svg></button>
    <button aria-label="Sticky notes" class="alert stack"><svg viewBox="0 0 28 28"><path d="M2 2h24v24H2z" fill="#3b3b3b"/><path d="M15 14h11L18 26h-3z" fill="#ffd60a"/></svg></button>
    <button aria-label="Evernote"><svg viewBox="0 0 28 28"><circle cx="14" cy="14" r="14" fill="#fff"/><path d="M6 10l5-6h5l6 3c1 6 1 12-1 17h-5v-3h3v-3l-5 1H9c-3-1-3-5-3-9z" fill="#16a83a"/></svg></button>
    <button aria-label="Settings" class="run"><svg viewBox="0 0 24 24"><path d="M9 0h6l1 4 4-1 4 6-3 3 3 3-4 6-4-1-1 4H9l-1-4-4 1-4-6 3-3-3-3 4-6 4 1z" fill="#7b8086"/><circle cx="12" cy="12" r="6" fill="#e8edf2"/><circle cx="12" cy="12" r="4.500" fill="#0f5ea8"/></svg></button>
    <button aria-label="1Password" class="run"><svg><use href="#onepw"/></svg></button>
    <button aria-label="Chat" class="run"><svg viewBox="0 0 28 28"><path d="M14 1a13 12 0 1 1-3 23.500L5 28l1-6A13 12 0 0 1 14 1z" fill="url(#gChat)"/><circle cx="8" cy="13" r="2" fill="#dbe9fa"/><circle cx="14" cy="13" r="2" fill="#dbe9fa"/><circle cx="20" cy="13" r="2" fill="#dbe9fa"/></svg></button>
    <button aria-label="Speed test" class="run"><svg viewBox="0 0 28 28"><path d="M4 24A12 12 0 0 1 4 9" fill="none" stroke="#b5cc2e" stroke-width="4"/><path d="M5 8q7-8 16-3" fill="none" stroke="#f79a1c" stroke-width="4"/><path d="M22 6q7 8 3 18" fill="none" stroke="#e8156c" stroke-width="4"/><path d="M9 10l8 12" stroke="#123a6b" stroke-width="3"/></svg></button>
    <button aria-label="Notepad" class="run"><svg viewBox="0 0 28 28"><rect x="4" y="2" width="20" height="26" rx="1" fill="#4ec0dc"/><path d="M4 24h20v4H4z" fill="#b3550f"/><path d="M7 9h14M7 14h14M7 19h14" stroke="#14607a" stroke-width="2.500"/><path d="M6 0v4M11 0v4M16 0v4M21 0v4" stroke="#1d6f86" stroke-width="2"/></svg></button>
    <button aria-label="Excel" class="run"><svg><use href="#excel"/></svg></button>
    <button aria-label="Teams" class="alert"><svg viewBox="0 0 28 28"><circle cx="16" cy="7" r="5" fill="#7b83eb"/><rect x="9" y="11" width="17" height="16" rx="6" fill="#7b83eb"/><rect x="1" y="8" width="13" height="13" rx="1" fill="#4b53bc"/><text x="4" y="18.500" class="it" font-size="11">T</text><circle cx="24" cy="2" r="9" fill="#c42b1c"/><text x="20.500" y="6.500" class="it thin" font-size="13">8</text></svg></button>
    <button aria-label="Remote desktop" class="run"><svg viewBox="0 0 28 28"><path d="M3 2l13 2v14L4 17z" fill="#1c3fd0" stroke="#ccc" stroke-width="2"/><path d="M6 20h12v4H6z" fill="#333"/><circle cx="21" cy="20" r="6.500" fill="#ddd"/><path d="M18 17l4 3-4 3M24 16l-3 3 3 3" stroke="#3faa35" stroke-width="2" fill="none"/></svg></button>
    <button aria-label="Word" class="run"><svg viewBox="0 0 28 28"><rect x="7" y="2" width="20" height="24" rx="1" fill="#2b7cd3"/><path d="M7 2h20v7H7z" fill="#41a5ee"/><path d="M7 19h20v7H7z" fill="#103f91"/><rect x="1" y="8" width="13" height="13" rx="1" fill="#185abd"/><text x="2" y="18.500" class="it" font-size="11">W</text></svg></button>
    <button aria-label="PDF" class="run"><svg viewBox="0 0 28 28"><rect width="28" height="28" rx="2" fill="#b3161d"/><path d="M0 16h28v12H0z" fill="#7d0b0e"/><text x="2" y="8" class="it" font-size="8">PDF</text><path d="M11 25l2-5L25 8l3 3-12 12z" fill="#fff"/></svg></button>
    <button aria-label="Snipping tool" class="run"><svg viewBox="0 0 28 28"><path d="M2 16V4h12" fill="none" stroke="#e0541c" stroke-width="4" stroke-dasharray="3 1.500"/><path d="M17 3v17M6 16h17" stroke="#b8b8b8" stroke-width="3"/><circle cx="24" cy="14" r="3" fill="none" stroke="#1b9de0" stroke-width="2"/><circle cx="15" cy="24" r="3" fill="none" stroke="#1b9de0" stroke-width="2"/></svg></button>
    <button aria-label="Grammar" class="run"><svg viewBox="0 0 28 28"><rect x="3" y="3" width="23" height="23" rx="4" fill="#2d0a63"/><text x="7" y="21" class="it" font-size="18">G</text></svg></button>
  </div>
  <div class="tray">
    <svg viewBox="0 0 28 28"><path d="M7 18l7-8 7 8" fill="none" stroke="#222" stroke-width="2.500"/></svg>
    <svg viewBox="0 0 28 28"><circle cx="14" cy="14" r="9" fill="none" stroke="#625df5" stroke-width="10" stroke-dasharray="3 1.700"/><circle cx="14" cy="14" r="4" fill="#fff"/></svg>
    <svg viewBox="0 0 28 28"><circle cx="14" cy="14" r="12.500" fill="#fff" stroke="#2f8fdc" stroke-width="2"/><path d="M9 8h10v12H9zM9 12h10M9 16h10" fill="none" stroke="#2f8fdc" stroke-width="2"/></svg>
    <svg viewBox="0 0 28 28"><path d="M1 1h23v11H1zM6 13h21v13H6z" fill="#fff" stroke="#888" stroke-width="2"/><path d="M4 5h9M10 18h9" stroke="#888" stroke-width="2"/><path d="M18 3h4v4h-4zM21 16h4v4h-4z" fill="#2a5fb0"/></svg>
    <svg viewBox="0 0 28 28"><path d="M2 20a11 11 0 0 1 20-14L9 22q-4 2-7-2z" fill="#888" stroke="#222" stroke-width="1.500"/><circle cx="19" cy="20" r="8" fill="#d2252c"/><path d="M16 17l6 6M22 17l-6 6" stroke="#fff" stroke-width="1.800"/></svg>
    <svg viewBox="0 0 28 28"><path d="M1 23q-2-8 5-10Q9 4 17 6q4 2 5 7 6 1 5 7-1 4-4 4H4q-2 0-3-1z" fill="#1490df"/><path d="M6 13q9-2 17 10H4q-6-7 2-10z" fill="#28a8ea"/></svg>
    <svg viewBox="0 0 28 28"><path d="M0 0h28v28H0z" fill="#fbb768"/><path d="M5 4h18M8 9h12M14 6v18M7 9q0 8 7 9 7-1 7-9" fill="none" stroke="#b86a1a" stroke-width="2.500"/></svg>
    <svg viewBox="0 0 28 28"><path d="M0 0h28v28H0z" fill="#b4cb1e"/><path d="M6 14l6 6L23 7" fill="none" stroke="#fff" stroke-width="4"/></svg>
    <svg viewBox="0 0 28 28"><rect x="10" y="1" width="8" height="16" rx="4" fill="none" stroke="#1f4fa0" stroke-width="2.500"/><path d="M6 13q1 9 8 9t8-9M14 22v6" fill="none" stroke="#1f4fa0" stroke-width="2.500"/></svg>
  </div>
  <div class="sys">
    <svg viewBox="0 0 28 28"><path d="M2 11q12-11 24 0M6 16q8-7 16 0M10 20q4-3 8 0" fill="none" stroke="#111" stroke-width="2.200"/><circle cx="14" cy="24" r="2"/></svg>
    <svg viewBox="0 0 28 28"><path d="M2 10h5l7-6v20l-7-6H2zM18 9q4 5 0 10" fill="none" stroke="#111" stroke-width="2"/><path d="M22 5q7 9 0 18" fill="none" stroke="#aaa" stroke-width="2"/></svg>
    <svg viewBox="0 0 28 28"><path d="M4 8h20v15H4zM25 13h2v5h-2z" fill="#111"/><path d="M3 2v8q5 2 7 0V2" fill="#fff" stroke="#111" stroke-width="2"/></svg>
  </div>
  <div class="clock"><span>9:42 PM</span><span>1/17/2025</span></div>
  <svg class="zz" viewBox="0 0 28 28"><path d="M4 22h18l-2-4V9Q18 3 13 3T6 9v9zM10 24h6v3h-6z" fill="#111"/><text x="13" y="12" font-size="14" font-weight="800" stroke="#e8eef0" stroke-width="1">z</text></svg>
</footer>
</body>
</html>
```
FILE: styles.css
```css
* { box-sizing: border-box; margin: 0; padding: 0; }
html, body { height: 100%; }
body {
  display: flex; flex-direction: column; overflow: hidden;
  font: 22px/30px "Open Sans", "Noto Sans", sans-serif; color: #292827;
}
a { color: inherit; text-decoration: none; }
button, input { font: inherit; color: inherit; background: none; border: 0; }
button { display: flex; align-items: center; justify-content: center; flex: none; white-space: nowrap; }
svg { display: block; flex: none; width: 24px; height: 24px; fill: currentColor; overflow: visible; }
.ln { fill: none; stroke: currentColor; stroke-width: var(--sw, 1.6); }
.it { fill: #fff; font-weight: 700; }
.it.thin { font-weight: 400; }
.defs { position: absolute; width: 0; height: 0; }
ul, ol { list-style: none; }
h1, h2, h3 { font-weight: 600; }

.desktop {
  position: relative; flex: 1; min-height: 0; overflow: hidden;
  background: linear-gradient(#9dbde0, #b4cbe2 19%, #0c2b52 21%, #04264a 42%, #020f1c 48%, #054a5c 58%, #03303f 85%, #010b10);
}
.win {
  position: absolute; isolation: isolate; display: flex; flex-direction: column; overflow: hidden;
  border: 2px solid #9b9b9b; border-radius: 16px; background: #f2f2f2;
  box-shadow: 0 8px 40px rgba(0, 0, 0, .28);
}
.wbar { display: flex; align-items: center; flex: none; }
.wbtns { display: flex; margin-left: auto; }
.wbtns button { width: 80px; height: 44px; }
.wbtns svg { width: 20px; height: 20px; }
.faint { color: #b2b2b2; }
.dim, .grey { color: #8c8c8c; }
.light { color: #fff; --sw: 2; }

/* windows that only show an edge */
.back-a { inset: 0 120px 0 42px; background: #e4e4e4; }
.back-b { inset: 3px 600px 12px 13px; background: #bcbcbc; }
.back-e { inset: 2px 1400px 48px 12px; background: #e8e8e8; }
.back-d { inset: 37px 488px 1500px 2600px; background: #e2e2e2; }

/* spreadsheet */
.excel { inset: 3px 11px 11px 400px; background: #efefef; border-color: #858585; font-size: 21px; }
.excel .wbar { height: 84px; }
.excel .wbtns, .outlook .wbtns { margin-left: 0; }
.excel .wbtns button, .outlook .wbtns button { width: 84px; }
.jp { width: 42px; height: 42px; margin: 0 20px 0 auto; border-radius: 50%; background: #881798; color: #dcb2e2; font-size: 17px; line-height: 42px; text-align: center; }
.xl-actions { display: flex; justify-content: flex-end; gap: 16px; margin: 4px 21px 7px; }
.xl-actions button { height: 41px; gap: 8px; border-radius: 7px; font-size: 21px; padding: 0 9px; }
.xl-actions svg { width: 20px; height: 20px; }
.xl-actions svg.tiny { width: 12px; height: 12px; --sw: 4; }
.comments { border: 2px solid #8a8a8a; background: #fff; }
.xl-actions .comments { background: #fff; }
.xl-actions .share { background: #107c41; color: #fff; }
.xl-ribbon { display: flex; justify-content: flex-end; height: 174px; margin-right: 13px; border-radius: 12px; background: #fff; box-shadow: 0 2px 6px rgba(0, 0, 0, .25); font-size: 20px; line-height: 28px; }
.xl-cut { display: flex; flex-direction: column; justify-content: space-between; padding: 72px 18px 2px; }
.analyze { flex-direction: column; justify-content: flex-start; gap: 8px; width: 112px; height: 154px; margin-top: 9px; padding-top: 5px; border: solid #d0d0d0; border-width: 0 2px; }
.analyze svg { width: 50px; height: 50px; }
.collapse { align-items: flex-end; justify-content: flex-end; width: 184px; padding: 0 16px 12px; }
.collapse svg { width: 20px; height: 20px; --sw: 2; }
.xl-formula { display: flex; align-items: center; justify-content: flex-end; height: 39px; margin: 15px 15px 11px; padding-right: 6px; border: 1px solid #d0d0d0; border-radius: 8px; background: #fff; }
.xl-formula svg { width: 20px; height: 20px; --sw: 2; }
.xl-sheet { display: flex; flex: 1; min-height: 0; }
.xl-cells { flex: 1; display: flex; flex-direction: column; }
.xl-cols { display: flex; justify-content: flex-end; height: 34px; border-bottom: 2px solid #a6a6a6; font-size: 20px; text-align: center; color: #444; }
.xl-cols span { width: 120px; border-left: 1px solid #c9c9c9; }
.xl-cols span.u { width: 56px; overflow: hidden; padding-left: 52px; text-align: left; color: #a03030; }
.xl-grid { flex: 1; background: linear-gradient(to left, #dcdcdc 2px, transparent 2px) right 54px top 0 / 120px 100%, linear-gradient(to top, #dcdcdc 1px, transparent 1px) 0 0 / 100% 34px, #fff; border-bottom: 1px solid #ccc; }
.xl-scroll { display: flex; flex-direction: column; align-items: center; gap: 8px; width: 34px; padding: 11px 0 10px; border-left: 1px solid #ddd; background: #f5f5f5; }
.xl-scroll b { width: 14px; flex: 1; border-radius: 7px; background: #707070; margin-bottom: 18px; }
.xl-scroll i { border: 8px solid transparent; }
.xl-scroll .tri-up { border-top-width: 0; border-bottom: 13px solid #606060; }
.xl-scroll .tri-down { border-bottom-width: 0; border-top: 13px solid #606060; }
.xl-hscroll { display: flex; align-items: center; justify-content: flex-end; gap: 34px; height: 30px; margin: 12px 34px 14px 0; padding-right: 8px; border-radius: 10px; background: #f7f7f7; }
.xl-hscroll b { width: 500px; height: 14px; border-radius: 7px; background: #707070; }
.xl-hscroll i { border: 8px solid transparent; border-left: 12px solid #606060; border-right: 0; }
.xl-status { display: flex; align-items: center; justify-content: flex-end; gap: 12px; height: 40px; padding-right: 31px; border-top: 2px solid #fff; color: #444; }
.xl-status i { width: 300px; height: 2px; background: #555; }
.xl-status span { font-size: 28px; }
.xl-status span.pct { font-size: 19px; margin-left: 10px; }

/* pale window at the top right */
.peek-c { inset: 0 346px 1529px 2319px; background: #efefef; border-color: #b8b8b8; }
.peek-c .wbar { height: 52px; }
.peek-tools { display: flex; align-items: center; justify-content: flex-end; height: 83px; padding-right: 29px; border-bottom: 2px solid #d5d5d5; color: #222; }
.peek-page { flex: 1; background: #fafafa; }
.peek-foot { height: 82px; border-top: 1px solid #d5d5d5; background: #f0f0f0; }

.purple { inset: 42px 394px 917px 2400px; border: 0; background: #320c38; }
.purple .wbar { height: 86px; }
.purple-page { flex: 1; margin: 0 5px 0 6px; border-radius: 14px; background: #fff; }
.purple-top { display: flex; align-items: center; justify-content: flex-end; gap: 48px; height: 190px; padding: 0 52px 82px 0; border-bottom: 3px solid #d8d8d8; }
.purple-box { display: flex; align-items: center; justify-content: flex-end; width: 400px; height: 59px; padding-right: 10px; border: 2px solid #ddd; border-radius: 16px; color: #555; --sw: 3; margin-top: 24px; }
.purple-box svg { width: 22px; height: 22px; }
.kebab { display: grid; gap: 6px; margin-top: 24px; }
.kebab i { width: 8px; height: 8px; border-radius: 50%; background: #555; }

/* mail */
.outlook { inset: 891px 185px -15px 270px; background: #efefef; border-color: #7d7d7d; font-size: 20px; }
.outlook .wbar { height: 84px; }
.ol-bell { position: relative; margin: 0 10px 0 auto; padding-right: 20px; }
.ol-bell b { position: absolute; top: -14px; right: 4px; width: 28px; height: 28px; border-radius: 50%; background: #d13438; color: #fff; font-size: 16px; line-height: 28px; text-align: center; }
.ol-try { display: flex; align-items: center; justify-content: flex-end; gap: 11px; height: 53px; padding-right: 18px; font-size: 21px; }
.pill { display: flex; align-items: center; gap: 7px; width: 74px; height: 34px; padding-left: 3px; border: 2px solid #5c5c5c; border-radius: 17px; background: #fff; color: #666; font-size: 18px; }
.pill input { appearance: none; width: 25px; height: 25px; border-radius: 50%; background: #616161; }
.ol-ribbon { display: flex; justify-content: flex-end; height: 174px; margin-right: 13px; border-radius: 14px; background: #fff; box-shadow: 0 2px 5px rgba(0, 0, 0, .2); }
.ol-group { display: flex; flex-direction: column; align-items: center; width: 123px; height: 156px; margin-top: 8px; padding-top: 5px; border-right: 2px solid #c9c9c9; line-height: 28px; text-align: center; }
.ol-group.viva { width: 110px; }
.ol-group svg { width: 50px; height: 50px; margin-bottom: 8px; }
.ol-group small { margin-top: 16px; font-size: 18px; line-height: 26px; }
.ol-ribbon .collapse { width: 121px; padding-bottom: 14px; }
.ol-body { display: flex; flex: 1; min-height: 0; margin-top: 11px; }
.ol-folders { display: flex; flex-direction: column; justify-content: flex-end; width: 407px; margin-left: 98px; border-left: 1px solid #ccc; color: #444; font-size: 20px; }
.ol-folders a { display: flex; align-items: center; height: 43px; padding-left: 33px; }
.ol-folders svg { width: 16px; height: 20px; margin-left: -19px; margin-right: 3px; --sw: 3; }
.ol-folders b { margin-left: auto; padding-right: 50px; color: #144f90; }
.ol-list { display: flex; flex-direction: column; justify-content: flex-end; width: 1936px; margin-left: 4px; font-size: 22px; background: #fff; }
.ol-tan { flex: 1; background: #fbf7df; border-bottom: 2px solid #c0c0c0; }
.ol-row { display: flex; align-items: center; height: 50px; padding: 0 0 0 98px; border-bottom: 2px solid #d2d2d2; color: #222; background: #fafafa; }
.ol-row svg { color: #9a50a8; margin-right: 47px; width: 26px; height: 26px; --sw: 2; }
.from { width: 439px; }
.subj { width: 758px; }
.date { width: 344px; }
.ol-next { height: 16px; background: #f6f6f6; }
.ol-next i { display: block; width: 7px; height: 16px; background: #144f90; }
.ol-bar { width: 30px; margin: 0 7px 0 13px; background: #d8d8d8; }
.ol-read { flex: 1; margin-right: 14px; border: 1px solid #c9c9c9; border-radius: 14px 14px 0 0; background: #fff; }
.ol-acts { display: flex; justify-content: flex-end; gap: 14px; margin: 88px 46px 8px 0; }
.ol-acts button { width: 56px; height: 56px; border: 2px solid #a6a6a6; border-bottom: 0; }
.ol-acts svg { width: 28px; height: 28px; }
.ol-acts .more { border-radius: 8px; color: #222; }
.grp { display: flex; border-radius: 8px; }
.grp button + button { margin-left: -1px; }
.grp button:last-child { border-radius: 0 8px 8px 0; }
.ink { color: #333; } .vio { color: #a848b4; } .blu { color: #1f86d4; }
.ol-read time { display: block; margin-right: 46px; text-align: right; color: #666; font-size: 19px; }
.ol-mail { width: 338px; margin-left: auto; color: #000; font-family: Inter, "Open Sans", sans-serif; }
.ol-mail h2 { margin-top: 42px; font-size: 37px; font-weight: 700; line-height: 48px; }
.ol-mail p { margin-top: 105px; font-size: 25px; line-height: 30px; }

/* ScreenConnect */
.screenc { inset: 20px 655px 26px 24px; font-family: Roboto, "Open Sans", sans-serif; }
.screenc .wbar { height: 50px; padding: 0 0 4px 6px; border-bottom: 2px solid #111; font: 20px/30px "Open Sans", sans-serif; }
.screenc .wbar > svg { width: 28px; height: 28px; margin-right: 43px; }
.screenc .wbar > svg.sclogo { color: #a8c4c6; margin-right: 30px; }
.screenc .wbar .ttl { margin-left: -6px; }
.sc-body { display: flex; flex: 1; min-height: 0; }
.sc-side { display: flex; flex-direction: column; width: 130px; background: #222; color: #c9c9c9; }
.sc-brand { display: grid; place-items: center; height: 102px; background: #466fcf; color: #fff; }
.sc-brand svg { width: 70px; height: 54px; }
.sc-nav { margin-top: 15px; }
.sc-nav a { display: flex; flex-direction: column; align-items: center; gap: 14px; height: 111px; padding-top: 20px; font-size: 22px; border-left: 7px solid transparent; border-right: 7px solid transparent; --sw: 2; }
.sc-nav a.on { border-left-color: #466fcf; background: #3a3a3a; color: #fff; }
.sc-nav svg { width: 32px; height: 32px; }
.sc-pill { display: flex; flex-direction: column; align-items: center; justify-content: space-between; width: 84px; height: 240px; margin: auto auto 22px; padding: 27px 0 19px; border-radius: 42px; background: #303030; --sw: 2; }
.sc-pill svg { width: 34px; height: 34px; }
.sc-pill span { width: 56px; height: 56px; border-radius: 50%; background: #466fcf; color: #fff; font-size: 30px; line-height: 56px; text-align: center; }
.sc-info { width: 757px; padding: 25px 61px; border-right: 2px solid #ddd; background: #f4f4f4; color: #222; white-space: nowrap; overflow: hidden; }
.sc-info h1 { font-size: 41px; font-weight: 400; line-height: 50px; }
.sc-info p { margin-top: 33px; font-size: 23px; }
.sc-list { display: flex; align-items: flex-start; flex: 1; padding: 34px 26px; background: #fff; color: #222; }
.sc-list h2, .sc-detail h2 { font-size: 31px; font-weight: 400; }
.sc-cmds { display: flex; gap: 34px; margin-left: auto; font-size: 24px; }
.sc-cmds span { display: flex; align-items: center; gap: 14px; --sw: 2; }
.sc-cmds svg { width: 30px; height: 30px; }
.sc-detail { width: 736px; padding: 34px 29px; border-left: 1px solid #ddd; background: #f4f4f4; }
.sc-detail h2 { font-size: 27px; }

/* Hudu */
.hudu { inset: 223px 1600px 115px 102px; background: #fff; color: #111; border-color: #777; }
.hudu .wbar { height: 55px; padding-left: 6px; border-bottom: 2px solid #000; background: #f3f3f3; font-size: 20px; white-space: nowrap; }
.spark { width: 28px; height: 28px; margin-right: 25px; opacity: .45; }
.hd-nav { display: flex; flex: none; height: 95px; background: #376437; color: #fff; font-size: 24px; font-weight: 600; box-shadow: 0 4px 10px rgba(0, 0, 0, .35); z-index: 1; }
.hd-logo { display: flex; align-items: center; width: 287px; padding-left: 27px; font-size: 43px; font-weight: 800; }
.hd-logo svg { width: 55px; height: 38px; margin-right: 5px; }
.hd-nav a { display: flex; align-items: center; padding: 0 41px 0 42px; }
.hd-nav a.on { position: relative; background: #2b512b; }
.hd-nav a.on::after { content: ""; position: absolute; left: 66px; right: 66px; bottom: 7px; height: 7px; border-radius: 4px; background: #dfe6df; }
.hd-head { flex: none; height: 182px; padding: 34px 28px; border-bottom: 1px solid #ccc; background: #f5f5f5; white-space: nowrap; }
.hd-crumb { display: flex; gap: 14px; font-size: 24px; color: #4f6bdc; }
.hd-crumb i { font-style: normal; color: #111; }
.hd-head h1 { margin-top: 42px; font-size: 42px; font-weight: 400; line-height: 68px; }
.hd-doc { padding: 40px 28px; font-size: 26px; line-height: 39px; white-space: nowrap; }
.hd-read { display: flex; align-items: center; gap: 17px; margin-bottom: 29px; font-size: 20px; line-height: 36px; }
.hd-read svg { width: 22px; height: 22px; }
.hd-doc ol { list-style: decimal; }
.hd-doc > ol { margin-top: 29px; padding-left: 70px; }
.hd-doc ol ol { padding-left: 71px; }
.hd-doc ol ol li { margin-bottom: 10px; }

/* browser */
.edge { inset: 124px 538px 63px 694px; border-color: #a5a5a5; background: #f7f7f7; box-shadow: 0 20px 80px 6px rgba(0, 0, 0, .5); }
.tabs { display: flex; align-items: center; flex: none; height: 70px; padding: 10px 0 0 17px; background: #cdcdcd; color: #000; }
.prof { display: grid; place-items: center; width: 42px; height: 42px; margin-right: 34px; border-radius: 50%; background: #fafafa; color: #8b8b8b; }
.tico { width: 30px; height: 30px; margin-right: 42px; }
.tico + .tico { width: 28px; height: 28px; margin-right: 34px; }
.tablist { display: flex; align-self: stretch; align-items: center; }
.tab { display: flex; align-items: center; gap: 18px; width: 80px; height: 36px; padding-left: 12px; overflow: hidden; border-left: 2px solid #7a7a7a; font-size: 20px; white-space: nowrap; }
.tab svg { width: 28px; height: 28px; }
.tab.off svg { opacity: .5; }
.tab.active { align-self: stretch; gap: 16px; height: auto; border: 0; border-radius: 14px 14px 0 0; background: #f7f7f7; padding-left: 13px; }
.tab.active svg { width: 15px; height: 15px; --sw: 2; }
.newtab { width: 72px; height: 48px; }
.tabs .wbtns { align-self: flex-start; }
.tabs .wbtns button { width: 81px; --sw: 2; }
.toolbar { display: flex; align-items: center; flex: none; height: 70px; padding-left: 10px; color: #111; }
.toolbar > button { width: 77px; height: 48px; }
.toolbar > button svg, .toolbar .exts svg { width: 28px; height: 28px; }
.addr { display: flex; align-items: center; flex: 1; height: 56px; margin-left: 11px; padding: 0 29px; border: 2px solid #d0d0d0; border-radius: 28px; background: #fff; color: #666; }
.addr svg { width: 28px; height: 28px; margin-left: 42px; }
.addr svg:first-child { margin: 0 27px 0 0; }
.url { flex: 1; overflow: hidden; font-size: 23px; white-space: nowrap; color: #767676; }
.url b { font-weight: 400; color: #000; }
.exts { display: flex; align-items: center; gap: 49px; padding: 0 29px 0 35px; }
.ub { position: relative; }
.ub b { position: absolute; left: 10px; top: 18px; width: 27px; height: 22px; border-radius: 5px; background: #666; color: #fff; font-size: 16px; line-height: 22px; text-align: center; }
.exts.right { padding: 0 16px 0 27px; border-left: 1px solid #ccc; }
.toolbar .exts svg.big { width: 40px; height: 40px; margin-left: -7px; }
.marks { display: flex; align-items: center; flex: none; gap: 30px; height: 57px; margin-bottom: 2px; padding: 0 24px 0 18px; color: #1a1a1a; font-size: 20px; white-space: nowrap; }
.marks a { display: flex; align-items: center; gap: 10px; }
.marks a.wide { margin-right: 13px; }
.marks svg { width: 28px; height: 27px; --sw: 2; }
.marks-end { display: flex; align-items: center; gap: 22px; margin-left: auto; }
.marks-end > svg { width: 24px; }
.marks-end > a { padding-left: 24px; border-left: 1px solid #ccc; }

/* Azure portal */
.page { display: flex; flex-direction: column; flex: 1; min-height: 0; margin: 0 5px 5px; border: 1px solid #ddd; border-top: 0; border-radius: 14px; background: #fff; overflow: hidden; }
.az-top { display: flex; align-items: center; flex: none; height: 70px; padding: 0 10px 0 29px; background: #4b77cc; color: #fff; }
.burger svg { width: 25px; height: 25px; }
.az-brand { width: 671px; padding-left: 52px; font-size: 25px; font-weight: 600; }
.az-search { display: flex; align-items: center; flex: 1; gap: 15px; height: 46px; margin: 0 28px 0 12px; padding: 0 13px; border-radius: 4px; background: #bfd4ef; color: #3f5f9e; }
.az-search input { flex: 1; }
.az-search input::placeholder, .side-search input::placeholder { color: inherit; opacity: 1; }
.az-copilot { gap: 8px; width: 156px; height: 46px; border-radius: 6px; font-weight: 600; }
.az-top .az-copilot { background: #fff; color: #2b3a5e; }
.az-icons { display: flex; margin-left: 26px; }
.az-icons button { width: 70px; height: 48px; }
.az-icons svg { width: 28px; height: 28px; }
.az-acct { width: 315px; text-align: right; font-size: 24px; line-height: 28px; }
.az-acct small { display: block; font-size: 16px; font-weight: 600; line-height: 24px; }
.az-ava { width: 48px; height: 52px; margin-left: 12px; }
.crumb { display: flex; align-items: center; gap: 10px; padding: 16px 36px 0; font-size: 23px; line-height: 32px; color: #4b77cc; }
.crumb svg { width: 18px; height: 18px; color: #666; }
.blade { display: flex; padding: 17px 51px 0 36px; }
.bl-ico { width: 46px; height: 49px; margin-top: 16px; }
.bl-name { flex: 1; padding-left: 20px; }
.bl-name h1 { display: flex; align-items: center; font-size: 39px; line-height: 48px; }
.bl-name h1 svg { width: 20px; height: 20px; margin-left: 48px; color: #555; }
.bl-name p { margin-top: 4px; font-size: 20px; line-height: 32px; color: #666; }
.bl-close { width: 20px; height: 52px; }
.bl-close svg { width: 20px; height: 20px; }
.az-body { display: flex; gap: 35px; flex: 1; }
.side { width: 464px; padding-top: 24px; }
.side-top { display: flex; align-items: center; gap: 30px; padding-left: 28px; color: #555; }
.side-top > svg { width: 20px; height: 20px; }
.side-top > svg:last-child { margin-left: 4px; }
.side-search { display: flex; align-items: center; gap: 9px; width: 328px; height: 42px; margin-right: -13px; padding-left: 12px; border: 1px solid #777; border-radius: 3px; color: #666; }
.side-search svg { color: #4b77cc; width: 22px; height: 22px; }
.side-search input { width: 260px; font-size: 21px; }
.side ul { margin-top: 13px; }
.side li a { display: flex; align-items: center; gap: 14px; height: 56px; padding-left: 32px; border-left: 3px solid transparent; color: #323130; }
.side li.on a { border-color: #4b77cc; background: #edebe9; font-weight: 600; font-size: 21px; }
.side li svg { width: 28px; height: 28px; }
.side li svg.bold { --sw: 2; color: #000; }
.main { flex: 1; min-width: 0; padding: 13px 36px 0 0; }
.cmd { display: flex; align-items: center; height: 62px; padding-left: 14px; border-bottom: 1px solid #c8c6c4; gap: 24px; }
.cmd button { gap: 14px; }
.cmd svg { width: 28px; height: 28px; color: #4b77cc; }
.cmd i { width: 1px; height: 34px; margin: 0 6px; background: #d0d0d0; }
.cmd .dis, .cmd .dis svg { color: #a19f9d; }
.ptabs { display: flex; gap: 44px; margin-top: 18px; font-size: 24px; }
.ptabs a { height: 66px; padding: 0 2px; line-height: 63px; }
.ptabs a.on { border-bottom: 3px solid #4b77cc; font-weight: 600; font-size: 23px; }
.main h2 { font-size: 23px; line-height: 32px; }
.h-basic { margin-top: 51px; }
.person { display: flex; gap: 28px; margin-top: 43px; }
.pic { position: relative; width: 175px; height: 175px; border-radius: 50%; background: #54328a; color: #fff; font-size: 72px; font-weight: 600; line-height: 180px; text-align: center; }
.pic span { position: absolute; right: 0; bottom: 0; display: grid; place-items: center; width: 56px; height: 56px; border: 3px solid #fff; border-radius: 50%; background: #b8b8b8; color: #4b77cc; }
.pic svg { width: 28px; height: 26px; }
.pinfo { display: flex; flex-direction: column; padding-top: 35px; }
.pinfo strong { font-size: 33px; font-weight: 400; line-height: 46px; }
.facts { display: flex; align-items: flex-start; min-height: 288px; margin-top: 32px; }
.facts table { border-collapse: collapse; text-align: left; }
.props { width: 1018px; }
.props tr { height: 56px; }
.facts th { font-weight: 600; font-size: 21px; }
.props th { width: 331px; }
.props td svg { display: inline-block; width: 27px; height: 28px; margin-left: 20px; vertical-align: -4px; color: #4b77cc; }
.counts { margin-top: -9px; }
.counts tr { height: 73px; }
.counts th { width: 255px; }
.facts a, .card a { color: #4b77cc; }
.h-feed { margin-top: 39px; }
.cards { display: flex; gap: 34px; margin-top: 43px; }
.card { display: flex; gap: 30px; width: 679px; height: 200px; padding: 26px 28px; border-radius: 2px; box-shadow: 0 3px 8px rgba(0, 0, 0, .2), 0 0 2px rgba(0, 0, 0, .12); }
.card > svg { width: 58px; height: 64px; }
.card h3 { font-size: 21px; font-weight: 700; line-height: 34px; }
.card p { display: flex; align-items: center; gap: 5px; height: 44px; }
.card a { display: block; margin-top: 38px; line-height: 30px; }
.main .h-quick { margin-top: 44px; }
.quick { flex-direction: column; gap: 20px; margin: 60px 0 0 17px; }
.quick svg { width: 56px; height: 54px; color: #4b77cc; --sw: 4; }

/* taskbar */
.taskbar { display: flex; align-items: center; flex: none; height: 83px; border-top: 2px solid #b6babd; background: linear-gradient(90deg, #cbdfe6, #cfe2e8 5%, #f0f0f0 9%, #f0f0f0 27%, #e8eff8 38%, #e9eff7 55%, #f1f1f2 62%, #f2f2f2 94%, #d2e0e4 98%, #c9dce2); color: #222; font-size: 20px; z-index: 1; }
.widget { position: relative; width: 367px; padding-left: 37px; }
.widget svg { width: 40px; height: 50px; }
.widget b { position: absolute; left: 55px; top: -6px; width: 28px; height: 28px; border-radius: 50%; background: #c42b1c; color: #fff; font-size: 17px; font-weight: 400; line-height: 28px; text-align: center; }
.apps { display: flex; }
.apps button { position: relative; width: 77px; height: 70px; border-radius: 8px; }
.apps svg { width: 41px; height: 41px; }
.apps svg svg { width: 20px; height: 21px; }
.apps .run::after, .apps .alert::after, .apps .cur::after { content: ""; position: absolute; left: 50%; bottom: 1px; width: 10px; height: 5px; margin-left: -5px; border-radius: 3px; background: #8a8a8a; }
.apps .alert::after { background: #c42b1c; }
.apps .alert, .apps .cur { margin: 0 5px; width: 67px; background: #ebb0ac; }
.apps .stack { box-shadow: 2px 0 0 #f5dede, 5px 0 0 #ebb0ac; }
.apps .cur { background: #f5f8fb; box-shadow: 0 0 0 1px #dde3e8; }
.apps .cur::after { width: 28px; margin-left: -14px; background: #0f78d4; }
.tray { display: flex; align-items: center; gap: 28px; margin-left: auto; padding-right: 28px; }
.tray svg { width: 28px; height: 28px; }
.sys { display: flex; gap: 13px; margin-right: 30px; }
.sys svg { width: 28px; height: 28px; }
.clock { display: grid; text-align: right; line-height: 28px; }
.zz { width: 28px; height: 28px; margin: 0 35px 0 10px; }
```
